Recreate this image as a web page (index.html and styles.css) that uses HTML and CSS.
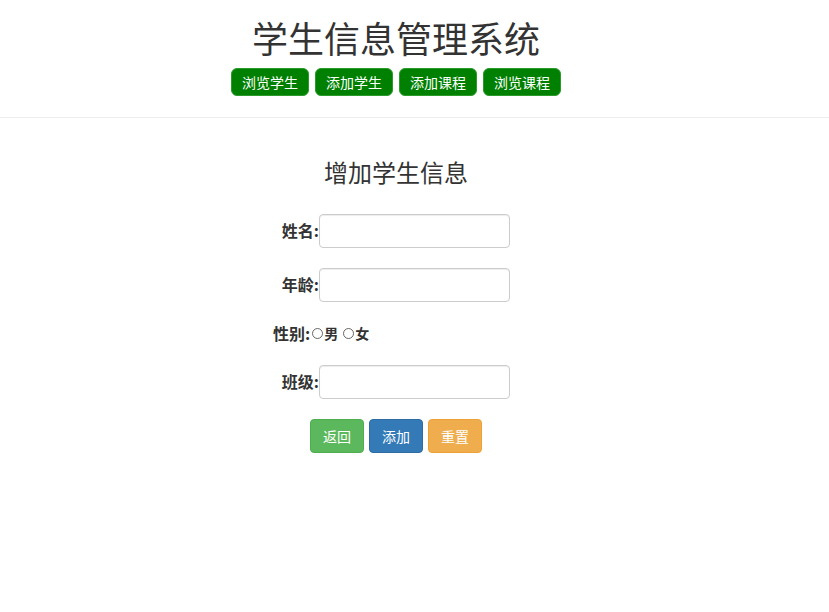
FILE: index.html
```html
<!DOCTYPE html>
<html lang="zh-CN">
<head>
  <meta charset="UTF-8" />
  <title>学生信息管理系统</title>
  <link rel="stylesheet" href="styles.css">
</head>
<body>
  <div class="header">
    <div class="wrap">
      <h1>学生信息管理系统</h1>
      <div class="nav">
        <a class="nav-btn" href="#">浏览学生</a>
        <a class="nav-btn" href="#">添加学生</a>
        <a class="nav-btn" href="#">添加课程</a>
        <a class="nav-btn" href="#">浏览课程</a>
      </div>
    </div>
  </div>

  <div class="wrap">
    <h3 class="form-title">增加学生信息</h3>
    <form class="stu-form">
      <label class="lbl" for="name">姓名:</label>
      <input class="form-control" type="text" id="name" />

      <label class="lbl" for="age">年龄:</label>
      <input class="form-control" type="text" id="age" />

      <div class="gender-row">
        <span class="lbl-inline">性别:</span><input type="radio" name="sex" id="male" /><label class="opt" for="male">男</label>
        <input type="radio" name="sex" id="female" /><label class="opt" for="female">女</label>
      </div>

      <label class="lbl" for="cls">班级:</label>
      <input class="form-control" type="text" id="cls" />
    </form>
    <div class="actions">
      <button class="btn btn-success" type="button">返回</button>
      <button class="btn btn-primary" type="button">添加</button>
      <button class="btn btn-warning" type="reset">重置</button>
    </div>
  </div>
</body>
</html>
```

FILE: styles.css
```css
body {
  margin: 0;
  font-family: "Noto Sans CJK SC", "Noto Sans", sans-serif;
  color: #333;
  background: #fff;
  font-size: 14px;
}
.wrap {
  width: 792px;
  text-align: center;
}
.header {
  border-bottom: 1px solid #eee;
  padding-top: 16px;
  height: 101px;
}
h1 {
  margin: 0;
  font-size: 36px;
  font-weight: normal;
  line-height: 42px;
}
.nav {
  margin-top: 10px;
  display: flex;
  justify-content: center;
  gap: 6px;
}
.nav-btn {
  display: block;
  width: 76px;
  height: 26px;
  line-height: 26px;
  background: #008000;
  border: 1px solid #2a9a2a;
  border-radius: 6px;
  color: #fff;
  text-decoration: none;
  font-size: 14px;
}
.form-title {
  margin: 38px 0 0;
  font-size: 24px;
  font-weight: normal;
  line-height: 32px;
}
.stu-form {
  margin: 26px 0 0 273px;
  display: grid;
  grid-template-columns: 46px 191px;
  row-gap: 20px;
  align-items: center;
  text-align: left;
}
.lbl {
  text-align: right;
  font-weight: bold;
  font-size: 16px;
  line-height: 20px;
  margin-top: -2px;
}
.form-control {
  box-sizing: border-box;
  height: 34px;
  margin: 0;
  padding: 6px 12px;
  border: 1px solid #ccc;
  border-radius: 4px;
  box-shadow: inset 0 1px 1px rgba(0,0,0,0.075);
  font-size: 14px;
}
.gender-row {
  grid-column: 1 / 3;
  display: flex;
  align-items: center;
  height: 22px;
  margin-bottom: 1px;
}
.lbl-inline {
  font-weight: bold;
  font-size: 16px;
}
.gender-row input[type=radio] {
  appearance: none;
  width: 11px;
  height: 11px;
  margin: 1px 1px 0 2px;
  border: 1px solid #666;
  border-radius: 50%;
}
.opt {
  font-size: 14px;
  font-weight: bold;
  margin-right: 3px;
}
.actions {
  margin-top: 20px;
  display: flex;
  justify-content: center;
  gap: 5px;
}
.btn {
  height: 34px;
  padding: 6px 12px;
  border: 1px solid transparent;
  border-radius: 4px;
  color: #fff;
  font-family: inherit;
  font-size: 14px;
  line-height: 20px;
}
.btn-success {
  background: #5cb85c;
  border-color: #4cae4c;
}
.btn-primary {
  background: #337ab7;
  border-color: #2e6da4;
}
.btn-warning {
  background: #f0ad4e;
  border-color: #eea236;
}
```
